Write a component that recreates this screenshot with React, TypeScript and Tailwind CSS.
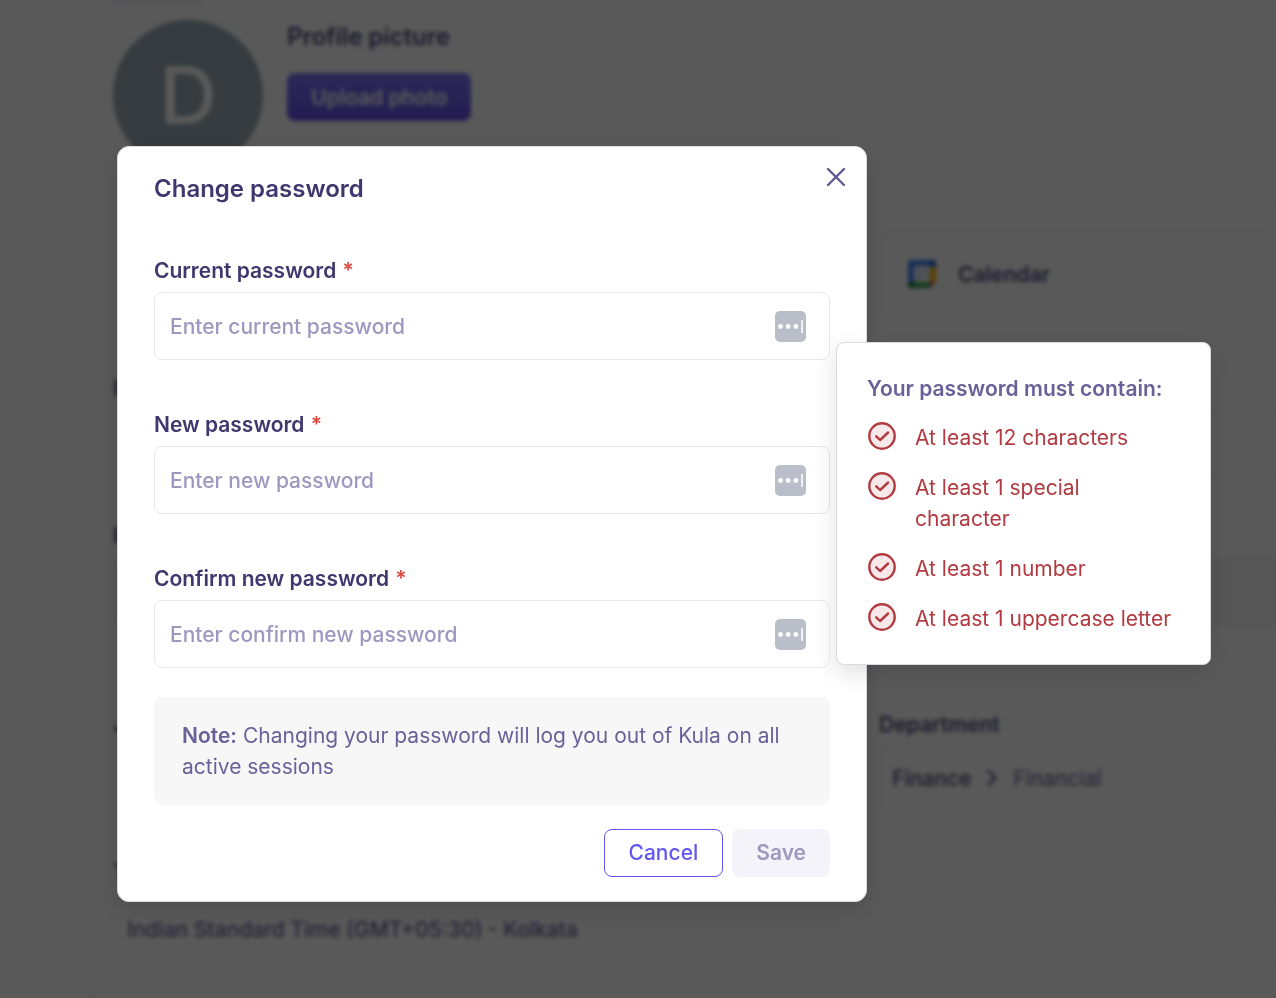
import { ChevronRight, X } from "lucide-react";
import { useId, type ReactNode } from "react";

const RULES = [
  "At least 12 characters",
  "At least 1 special character",
  "At least 1 number",
  "At least 1 uppercase letter",
];

function CalendarLogo() {
  return (
    <svg viewBox="0 0 28 28" className="h-7 w-7" aria-hidden="true">
      <path d="M2 0h20v6H6v16H0V2a2 2 0 0 1 2-2z" fill="#4285f4" />
      <path d="M22 0h4a2 2 0 0 1 2 2v5h-6z" fill="#1967d2" />
      <path d="M22 7h6v14h-6z" fill="#fbbc04" />
      <path d="M6 22h16v6H6z" fill="#34a853" />
      <path d="M0 22h6v6H2a2 2 0 0 1-2-2z" fill="#188038" />
      <path d="M22 21h6l-6 7z" fill="#ea4335" />
      <path d="M6 6h16v16H6z" fill="#fff" />
      <path
        d="M8 10.5q2-2 4 0t-2 3.300q4 1.300 2 3.700t-4.500 0M15.500 10.500l3-1.500v10"
        fill="none"
        stroke="#4285f4"
        strokeWidth="1"
      />
    </svg>
  );
}

function PasswordManagerIcon() {
  return (
    <svg viewBox="0 0 31 31" className="h-[31px] w-[31px]" aria-hidden="true">
      <rect width="31" height="31" rx="5" fill="#babec9" />
      <circle cx="5.500" cy="15.500" r="2.400" fill="#fff" />
      <circle cx="13.200" cy="15.500" r="2.400" fill="#fff" />
      <circle cx="20.800" cy="15.500" r="2.400" fill="#fff" />
      <rect x="26" y="9" width="2" height="13" rx="0.500" fill="#f1f2f4" />
    </svg>
  );
}

function CheckCircle() {
  return (
    <svg
      viewBox="0 0 28 28"
      fill="none"
      stroke="#b23a41"
      strokeLinecap="round"
      strokeLinejoin="round"
      className="h-7 w-7 shrink-0"
      aria-hidden="true"
    >
      <circle cx="14" cy="14" r="12.700" fill="#f7e8e9" strokeWidth="2.400" />
      <path d="M8.200 14.300l3.900 3.700 8-7.500" strokeWidth="2.400" />
    </svg>
  );
}

function PasswordRules() {
  return (
    <div className="absolute -top-[67px] left-full ml-[6px] w-[375px] rounded-lg border border-[#dcdce0] bg-white py-[30px] pr-9 pl-[30px] shadow-[0_8px_24px_rgba(0,0,0,0.12)]">
      <p className="text-[21px] leading-[31px] font-semibold whitespace-nowrap text-[#6b6199]">
        Your password must contain:
      </p>
      <ul className="mt-[18px] flex flex-col gap-[19px] pl-px">
        {RULES.map((rule) => (
          <li key={rule} className="flex items-start gap-[19px]">
            <CheckCircle />
            <span className="text-[21px] leading-[31px] text-[#b23a41]">
              {rule}
            </span>
          </li>
        ))}
      </ul>
    </div>
  );
}

function PasswordField({
  label,
  placeholder,
  children,
}: {
  label: string;
  placeholder: string;
  children?: ReactNode;
}) {
  const id = useId();

  return (
    <div className="relative">
      <label
        htmlFor={id}
        className="block text-[21px] leading-[31px] font-semibold text-[#40376e]"
      >
        {label} <span className="ml-px text-[#dc4a41]">*</span>
      </label>
      <div className="mt-[6px] flex h-[68px] items-center rounded-lg border border-[#e6e5f0] pr-[23px] pl-[15px]">
        <input
          id={id}
          type="password"
          placeholder={placeholder}
          className="min-w-0 flex-1 text-[21px] leading-[31px] font-medium text-[#40376e] outline-none placeholder:text-[#9d98bf]"
        />
        <PasswordManagerIcon />
      </div>
      {children}
    </div>
  );
}

function ChangePasswordModal() {
  return (
    <div
      role="dialog"
      aria-modal="true"
      aria-labelledby="modal-title"
      className="w-full max-w-[750px] rounded-xl border border-[#dcdce0] bg-white px-9 pt-[26px] pb-6 shadow-[0_8px_24px_rgba(0,0,0,0.15)]"
    >
      <div className="flex items-start justify-between">
        <h2
          id="modal-title"
          className="text-2xl leading-[32px] font-semibold text-[#40376e]"
        >
          Change password
        </h2>
        <button
          type="button"
          aria-label="Close"
          className="-mt-4 -mr-[26px] p-1 text-[#62588f]"
        >
          <X className="h-8 w-8" strokeWidth={1.8} />
        </button>
      </div>
      <form className="mt-[50px]">
        <div className="flex flex-col gap-[49px]">
          <PasswordField
            label="Current password"
            placeholder="Enter current password"
          />
          <PasswordField label="New password" placeholder="Enter new password">
            <PasswordRules />
          </PasswordField>
          <PasswordField
            label="Confirm new password"
            placeholder="Enter confirm new password"
          />
        </div>
        <p className="mt-[29px] rounded-lg bg-[#f7f7f7] px-7 py-[23px] text-[21px] leading-[31px] text-[#6b6199]">
          <strong className="font-semibold">Note:</strong> Changing your
          password will log you out of Kula on all active sessions
        </p>
        <div className="mt-6 flex justify-end gap-[9px] text-[21px] font-medium">
          <button
            type="button"
            className="h-12 rounded-lg border border-[#6257f0] px-6 text-[#6257f0]"
          >
            Cancel
          </button>
          <button
            type="submit"
            disabled
            className="h-12 rounded-lg bg-[#f3f3f9] px-6 font-semibold text-[#9d98bf]"
          >
            Save
          </button>
        </div>
      </form>
    </div>
  );
}

function ProfilePage() {
  return (
    <main className="min-h-screen overflow-hidden pl-[92px] text-[21px] leading-[31px] font-medium text-[#544c80]">
      <div className="min-h-screen border-l border-[#ececf2] pl-5">
        <div className="h-[5px] w-[88px] rounded-b-md bg-[#f3f3f9]" />
        <section className="flex h-[197px] gap-6 border-b border-[#f0f0f5] pt-[15px]">
          <div className="grid h-[150px] w-[150px] shrink-0 place-items-center rounded-full bg-[#99aab5] text-[80px] leading-none text-white">
            D
          </div>
          <div>
            <h2 className="mt-px text-2xl leading-[32px] font-semibold">
              Profile picture
            </h2>
            <button
              type="button"
              className="mt-5 h-12 rounded-lg bg-linear-to-b from-[#7f74f9] to-[#684fe8] px-6 font-semibold text-white"
            >
              Upload photo
            </button>
          </div>
        </section>
        <section className="mt-[30px] ml-[766px] flex h-[84px] items-center gap-[22px] rounded-lg border border-r-0 border-[#f0f0f5] pl-7 font-semibold">
          <CalendarLogo />
          Calendar
        </section>
        <div className="mt-[57px] grid grid-cols-[746px_1fr] items-end gap-x-5">
          <div>
            <h3 className="font-semibold">First name</h3>
            <div className="mt-[6px] h-[68px] rounded-lg border border-[#f0f0f5]" />
          </div>
          <div className="h-[68px] rounded-l-lg border border-r-0 border-[#f0f0f5]" />
        </div>
        <div className="mt-[42px] grid grid-cols-[746px_1fr] items-end gap-x-5">
          <div>
            <h3 className="font-semibold">Email</h3>
            <div className="mt-[6px] h-[70px] rounded-lg bg-[#f5f5f8]" />
          </div>
          <div className="h-[70px] rounded-l-lg bg-[#f5f5f8]" />
        </div>
        <div className="mt-[82px] grid grid-cols-[746px_1fr] gap-x-5">
          <div>
            <h3 className="font-semibold">Job title</h3>
            <div className="mt-[5px] h-[66px] rounded-lg border border-[#f0f0f5]" />
          </div>
          <div>
            <h3 className="font-semibold">Department</h3>
            <div className="mt-[5px] flex h-[66px] items-center gap-[7px] rounded-l-lg border border-r-0 border-[#f0f0f5] pl-3">
              Finance
              <ChevronRight className="h-7 w-7" />
              <span className="font-normal text-[#6b6199]">Financial</span>
            </div>
          </div>
        </div>
        <h3 className="mt-[46px] font-semibold">Timezone</h3>
        <div className="mt-[9px] flex h-[65px] items-center rounded-l-lg border border-r-0 border-[#f0f0f5] pl-[13px] text-[#6b6199]">
          Indian Standard Time (GMT+05:30) - Kolkata
        </div>
      </div>
    </main>
  );
}

export default function App() {
  return (
    <div className="h-screen overflow-hidden bg-white font-[Inter,sans-serif]">
      <ProfilePage />
      <div className="fixed inset-0 flex items-start bg-black/65 pt-[146px] pl-[117px] backdrop-blur-[2px]">
        <ChangePasswordModal />
      </div>
    </div>
  );
}
